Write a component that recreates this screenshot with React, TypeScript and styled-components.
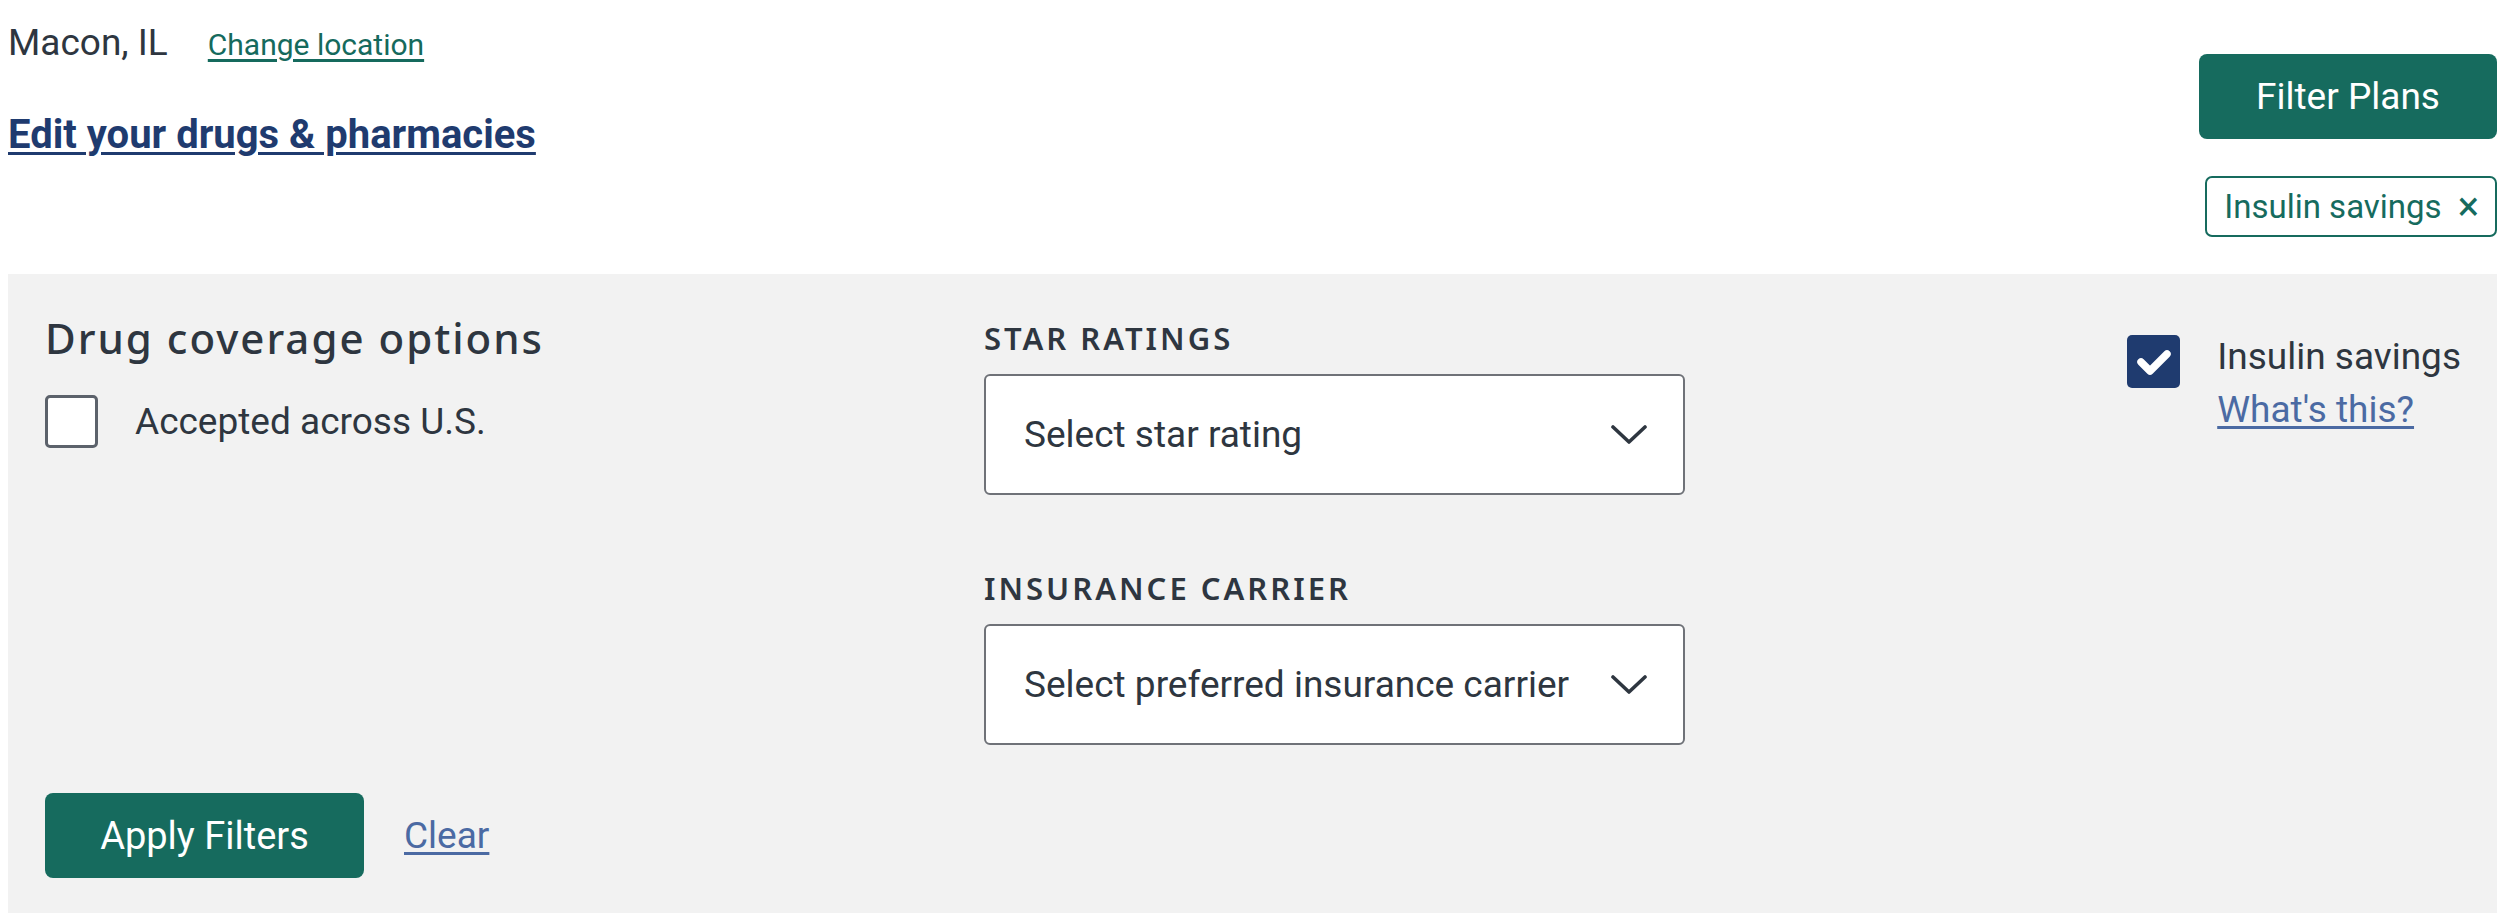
import React from 'react'
import styled, { createGlobalStyle } from 'styled-components'

const GlobalStyle = createGlobalStyle`
    html, body {
        margin: 0;
        padding: 0;
        background: #ffffff;
    }
    body {
        font-family: Roboto, "Liberation Sans", sans-serif;
        color: #2e3640;
    }
`

const Chevron = () => (
    <svg width="36" height="20" viewBox="0 0 36 20" fill="none">
        <polyline points="2,2 18,17 34,2" stroke="#2e3640" strokeWidth="3.6" strokeLinecap="round" strokeLinejoin="round" />
    </svg>
)

// white tick drawn over the whole 53px box
const Tick = () => (
    <svg width="53" height="53" viewBox="0 0 53 53" fill="none">
        <polyline points="14,27 23,36 40,19" stroke="#ffffff" strokeWidth="7.5" strokeLinecap="round" strokeLinejoin="round" />
    </svg>
)

const Dropdown: React.FC<{ label: string, placeholder: string }> = ({ label, placeholder }) => (
    <Field>
        <FieldLabel>{label}</FieldLabel>
        <SelectBox>
            <span>{placeholder}</span>
            <Chevron />
        </SelectBox>
    </Field>
)

const App: React.FC = () => {
    return (
        <Page>
            <GlobalStyle />
            <TopBar>
                <div>
                    <LocationRow>
                        <City>Macon, IL</City>
                        <SmallLink href="#">Change location</SmallLink>
                    </LocationRow>
                    <EditLink href="#">Edit your drugs &amp; pharmacies</EditLink>
                </div>
                <TopActions>
                    <PrimaryButton wide>Filter Plans</PrimaryButton>
                    <Chip>
                        Insulin savings
                        <ChipClose>×</ChipClose>
                    </Chip>
                </TopActions>
            </TopBar>

            <Panel>
                <PanelGrid>
                    <div>
                        <PanelTitle>Drug coverage options</PanelTitle>
                        <CheckRow>
                            <Box />
                            <CheckText>Accepted across U.S.</CheckText>
                        </CheckRow>
                    </div>
                    <Fields>
                        <Dropdown label="Star ratings" placeholder="Select star rating" />
                        <Dropdown label="Insurance carrier" placeholder="Select preferred insurance carrier" />
                    </Fields>
                    <RightCol>
                        <Box checked><Tick /></Box>
                        <InsulinText>
                            <span>Insulin savings</span>
                            <BlueLink href="#">What's this?</BlueLink>
                        </InsulinText>
                    </RightCol>
                </PanelGrid>
                <Footer>
                    <PrimaryButton>Apply Filters</PrimaryButton>
                    <BlueLink href="#">Clear</BlueLink>
                </Footer>
            </Panel>
        </Page>
    )
}

export default App

const Page = styled.div`
    padding: 0 17px 0 8px;
`

const TopBar = styled.div`
    display: flex;
    justify-content: space-between;
    height: 274px;
`

const LocationRow = styled.div`
    display: flex;
    align-items: baseline;
    gap: 40px;
    padding-top: 17px;
    line-height: 52px;
`

const City = styled.span`
    font-size: 37px;
    color: #2e3640;
`

const SmallLink = styled.a`
    font-size: 30px;
    color: #156a5d;
    text-decoration: underline;
    text-underline-offset: 4px;
`

const EditLink = styled.a`
    display: inline-block;
    margin-top: 40px;
    font-size: 40px;
    font-weight: 700;
    color: #1f3b6f;
    text-decoration: underline;
    text-decoration-thickness: 3px;
    text-underline-offset: 4px;
`

const TopActions = styled.div`
    display: flex;
    flex-direction: column;
    align-items: flex-end;
    gap: 37px;
    padding-top: 54px;
`

const PrimaryButton = styled.button<{ wide?: boolean }>`
    height: 85px;
    width: ${p => (p.wide ? '298px' : '319px')};
    border: none;
    border-radius: 8px;
    background: #166b5e;
    color: #ffffff;
    font-family: Roboto, "Liberation Sans", sans-serif;
    font-size: ${p => (p.wide ? '37px' : '38px')};
    cursor: pointer;
`

const Chip = styled.div`
    display: flex;
    align-items: center;
    gap: 16px;
    box-sizing: border-box;
    height: 61px;
    padding: 0 16px 0 17px;
    border: 2px solid #166b5e;
    border-radius: 7px;
    color: #166b5e;
    font-size: 33px;
`

const ChipClose = styled.span`
    font-size: 40px;
    line-height: 1;
`

const Panel = styled.div`
    background: #f2f2f2;
    padding: 40px 36px 35px 37px;
`

const PanelGrid = styled.div`
    display: grid;
    grid-template-columns: 939px 701px 1fr;
`

const PanelTitle = styled.h2`
    margin: 0;
    font-family: "Noto Sans", "Open Sans", sans-serif;
    font-weight: 500;
    font-size: 42px;
    line-height: 48px;
    letter-spacing: 2px;
    color: #2e3640;
`

const CheckRow = styled.div`
    display: flex;
    align-items: center;
    gap: 37px;
    margin-top: 33px;
`

const Box = styled.div<{ checked?: boolean }>`
    display: flex;
    align-items: center;
    justify-content: center;
    box-sizing: border-box;
    width: 53px;
    height: 53px;
    flex-shrink: 0;
    border-radius: 5px;
    background: ${p => (p.checked ? '#1f3b6f' : '#ffffff')};
    border: ${p => (p.checked ? 'none' : '3px solid #5c626b')};
`

const CheckText = styled.span`
    font-size: 37px;
    color: #2e3640;
`

const Fields = styled.div`
    display: flex;
    flex-direction: column;
    gap: 75px;
    padding-top: 6px;
`

const Field = styled.div`
    display: flex;
    flex-direction: column;
    gap: 18px;
`

const FieldLabel = styled.div`
    font-family: "Noto Sans", "Open Sans", sans-serif;
    font-weight: 600;
    font-size: 31px;
    line-height: 36px;
    letter-spacing: 3px;
    text-transform: uppercase;
    color: #2e3640;
`

const SelectBox = styled.div`
    display: flex;
    align-items: center;
    justify-content: space-between;
    box-sizing: border-box;
    height: 121px;
    padding: 0 36px 0 38px;
    background: #ffffff;
    border: 2px solid #6f7278;
    border-radius: 6px;
    font-size: 37px;
    color: #2e3640;
`

const RightCol = styled.div`
    display: flex;
    justify-content: flex-end;
    align-items: flex-start;
    gap: 37px;
    padding-top: 21px;
`

const InsulinText = styled.div`
    display: flex;
    flex-direction: column;
    margin-top: -5px;
    font-size: 37px;
    line-height: 53px;
    color: #2e3640;
`

const BlueLink = styled.a`
    font-size: 37px;
    color: #4b6aa3;
    text-decoration: underline;
    text-underline-offset: 4px;
`

const Footer = styled.div`
    display: flex;
    align-items: center;
    gap: 40px;
    margin-top: 48px;
`
